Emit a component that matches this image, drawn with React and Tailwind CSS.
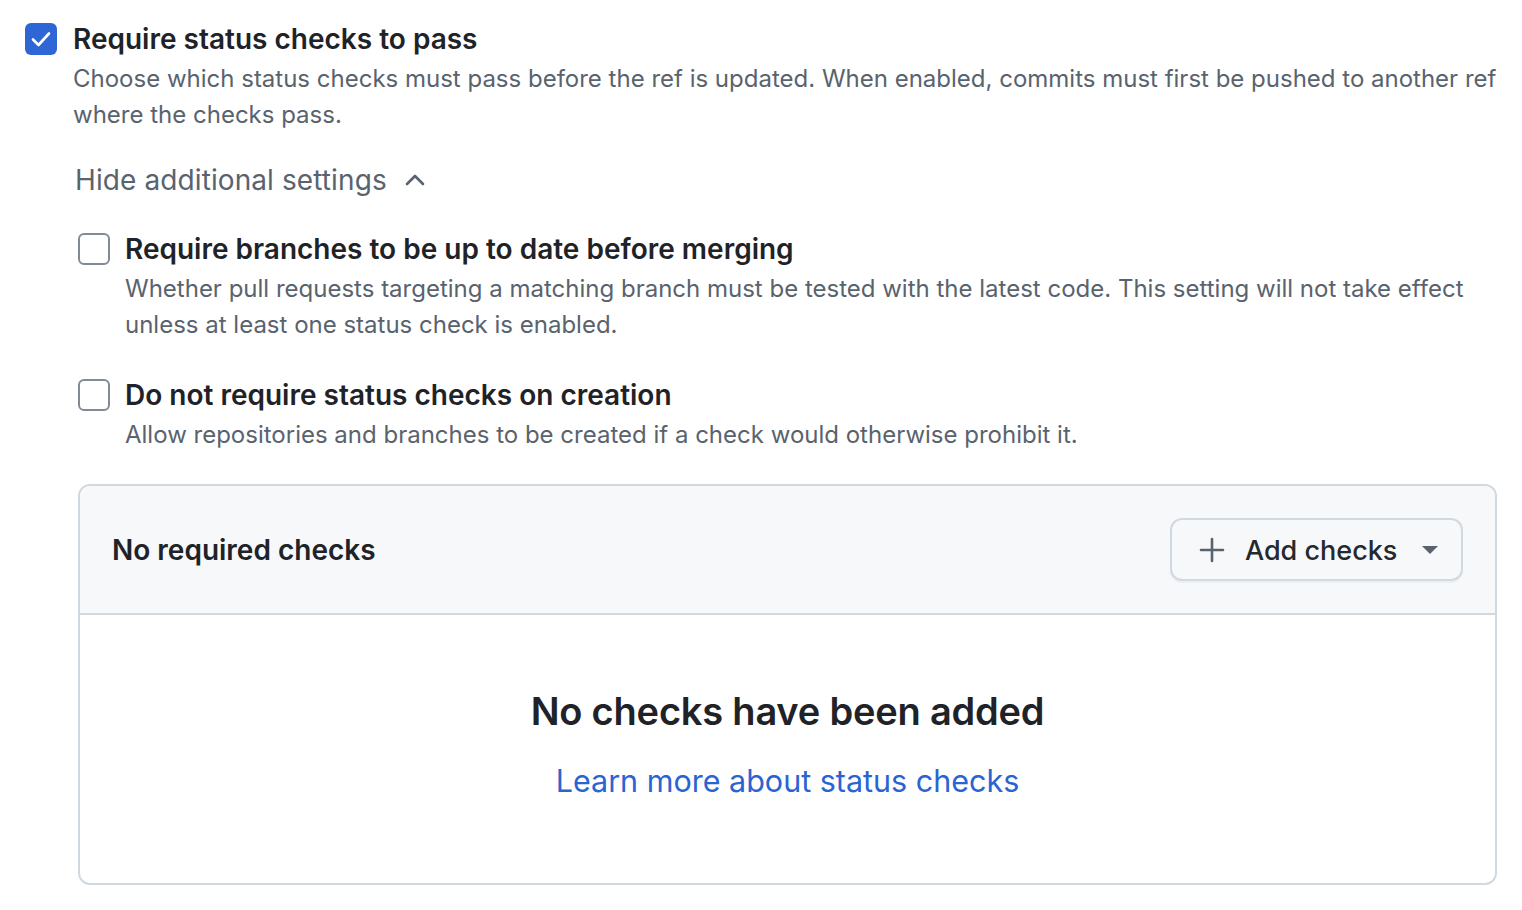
import React from "react";

const font = { fontFamily: "Inter, 'Noto Sans', sans-serif" };

function Checked() {
  return (
    <div className="w-[32px] h-[32px] rounded-[6px] bg-[#2f66d6] flex items-center justify-center shrink-0">
      <svg width="22" height="22" viewBox="0 0 22 22" fill="none">
        <path d="M3 11.5 L8.5 17 L19 5.5" stroke="white" strokeWidth="2.6" strokeLinecap="round" strokeLinejoin="round" />
      </svg>
    </div>
  );
}

function Unchecked() {
  return <div className="w-[32px] h-[32px] rounded-[6px] border-2 border-[#818b98] bg-white shrink-0" />;
}

export default function App() {
  return (
    <div className="w-[1522px] h-[910px] bg-white text-[#1f2328] overflow-hidden" style={font}>
      <div className="pl-[25px] pt-[23px] pr-[8px]">
        <div className="flex gap-[16px]">
          <Checked />
          <div className="flex-1">
            <div className="text-[28px] leading-[32px] font-semibold">Require status checks to pass</div>
            <p className="mt-[6px] text-[24px] leading-[36px] text-[#59636e]">
              Choose which status checks must pass before the ref is updated. When enabled, commits must first be pushed to another ref where the checks pass.
            </p>
          </div>
        </div>

        <div className="ml-[53px] mt-[29px] w-[1419px]">
          <button className="-ml-[3px] flex items-center gap-[16px] text-[28px] leading-[36px] text-[#59636e] tracking-[0.1px]">
            <span>Hide additional settings</span>
            <svg width="24" height="24" viewBox="0 0 24 24" fill="none">
              <path d="M4 16 L12 8 L20 16" stroke="#59636e" strokeWidth="2.6" strokeLinecap="round" strokeLinejoin="round" />
            </svg>
          </button>

          <div className="mt-[35px] flex gap-[15px]">
            <Unchecked />
            <div className="flex-1">
              <div className="text-[28px] leading-[32px] font-semibold">Require branches to be up to date before merging</div>
              <p className="mt-[6px] text-[24px] leading-[36px] text-[#59636e]">
                Whether pull requests targeting a matching branch must be tested with the latest code. This setting will not take effect unless at least one status check is enabled.
              </p>
            </div>
          </div>

          <div className="mt-[36px] flex gap-[15px]">
            <Unchecked />
            <div className="flex-1">
              <div className="text-[28px] leading-[32px] font-semibold">Do not require status checks on creation</div>
              <p className="mt-[6px] text-[24px] leading-[36px] text-[#59636e]">
                Allow repositories and branches to be created if a check would otherwise prohibit it.
              </p>
            </div>
          </div>

          <div className="mt-[31px] w-[1419px] h-[401px] border-2 border-[#d1d9e0] rounded-[12px] overflow-hidden flex flex-col">
            <div className="h-[129px] bg-[#f6f8fa] border-b-2 border-[#d1d9e0] flex items-center justify-between pl-[32px] pr-[32px]">
              <div className="text-[28px] font-semibold">No required checks</div>
              <button className="w-[293px] h-[63px] rounded-[12px] border-2 border-[#d1d9e0] bg-[#f6f8fa] shadow-[0_2px_0_rgba(31,35,40,0.04)] flex items-center pl-[26px]">
                <svg width="28" height="28" viewBox="0 0 28 28" fill="none">
                  <path d="M14 3 V25 M3 14 H25" stroke="#59636e" strokeWidth="2.6" strokeLinecap="round" />
                </svg>
                <span className="ml-[19px] pt-[3px] text-[27px] font-medium text-[#25292e]">Add checks</span>
                <svg className="ml-[24px]" width="18" height="12" viewBox="0 0 18 12">
                  <path d="M1 2 H17 L9 10 Z" fill="#59636e" />
                </svg>
              </button>
            </div>
            <div className="flex-1 flex flex-col items-center pt-[70px]">
              <div className="text-[38px] leading-[52px] font-semibold tracking-[-0.2px]">No checks have been added</div>
              <a className="mt-[24px] text-[30.5px] leading-[40px] text-[#2a64d3]">Learn more about status checks</a>
            </div>
          </div>
        </div>
      </div>
    </div>
  );
}
